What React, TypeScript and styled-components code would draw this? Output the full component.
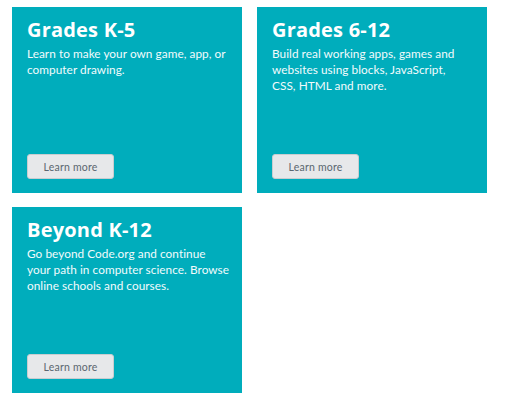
import * as React from 'react';
import styled, { createGlobalStyle } from 'styled-components';

const GlobalStyle = createGlobalStyle`
  body {
    margin: 0;
    background: #ffffff;
    font-family: Lato, "Liberation Sans", sans-serif;
  }
`;

type Pathway = {
    title: string;
    lines: string[];
};

// line breaks follow the original layout
const pathways: Pathway[] = [
    { title: 'Grades K-5', lines: ['Learn to make your own game, app, or', 'computer drawing.'] },
    { title: 'Grades 6-12', lines: ['Build real working apps, games and', 'websites using blocks, JavaScript,', 'CSS, HTML and more.'] },
    { title: 'Beyond K-12', lines: ['Go beyond Code.org and continue', 'your path in computer science. Browse', 'online schools and courses.'] },
];

const App = () => (
    <>
        <GlobalStyle />
        <Grid>
            {pathways.map((p) => (
                <Card key={p.title}>
                    <Title>{p.title}</Title>
                    <Description>
                        {p.lines.map((line) => (
                            <Line key={line}>{line}</Line>
                        ))}
                    </Description>
                    <LearnButton type="button">Learn more</LearnButton>
                </Card>
            ))}
        </Grid>
    </>
);

const Grid = styled.div`
    display: grid;
    grid-template-columns: repeat(2, 230px);
    grid-auto-rows: 186px;
    column-gap: 15px;
    row-gap: 14px;
    padding: 7px 0 0 12px;
`;

const Card = styled.div`
    display: flex;
    flex-direction: column;
    align-items: flex-start;
    background: #00adbc;
    padding: 10px 8px 14px 15px;
    box-sizing: border-box;
`;

const Title = styled.h2`
    margin: 0;
    color: #ffffff;
    font-family: "Open Sans", "Liberation Sans", sans-serif;
    font-size: 20px;
    font-weight: 700;
    letter-spacing: 0.2px;
    line-height: 26px;
`;

const Description = styled.p`
    margin: 3px 0 0;
    color: #f2fbfc;
    font-size: 11.8px;
    letter-spacing: 0.05px;
    line-height: 16px;
`;

const Line = styled.span`
    display: block;
    white-space: nowrap;
`;

const LearnButton = styled.button`
    margin-top: auto;
    width: 87px;
    height: 25px;
    background: #e7e8ea;
    border: 1px solid #c9cdd0;
    border-radius: 3px;
    color: #5b6770;
    font-family: Lato, "Liberation Sans", sans-serif;
    font-size: 10.5px;
    letter-spacing: 0.2px;
    padding: 0;
`;

export default App;
